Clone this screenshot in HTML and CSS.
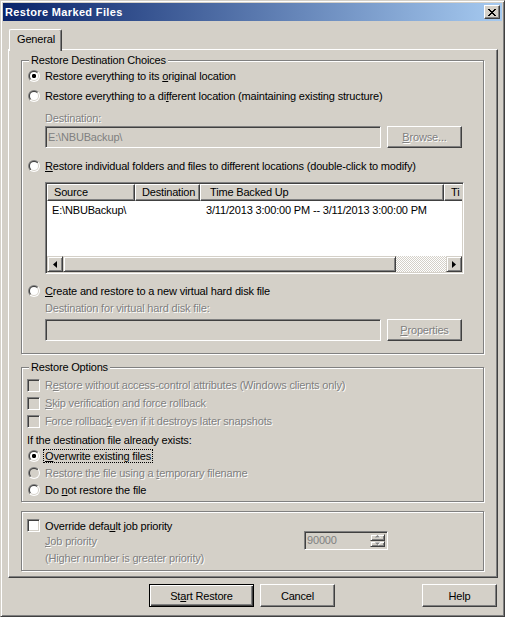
FILE: index.html
```html
<!DOCTYPE html>
<html lang="en">
<head>
<meta charset="utf-8">
<title>Restore Marked Files</title>
<link rel="stylesheet" href="styles.css">
</head>
<body>
<div class="window">
  <div class="titlebar">
    <span class="title">Restore Marked Files</span>
    <span class="close" role="button" aria-label="Close">
      <svg width="8" height="7" viewBox="0 0 8 7" shape-rendering="crispEdges"><path fill="#000" d="M0 0h2v1H0zM6 0h2v1H6zM1 1h2v1H1zM5 1h2v1H5zM2 2h4v1H2zM3 3h2v1H3zM2 4h4v1H2zM1 5h2v1H1zM5 5h2v1H5zM0 6h2v1H0zM6 6h2v1H6z"/></svg>
    </span>
  </div>

  <div class="tabs"><div class="tab">General</div></div>

  <div class="panel">
    <section class="group g-dest">
      <div class="legend">Restore Destination Choices</div>
      <div class="row h16 mt1"><span class="radio on"></span><span>Restore everything to its <u>o</u>riginal location</span></div>
      <div class="row h16 mt4"><span class="radio"></span><span>Restore everything to a di<u>f</u>ferent location (maintaining existing structure)</span></div>
      <div class="row h14 mt7 indent dis">Destination:</div>
      <div class="row mt1 indent">
        <div class="field w336">E:\NBUBackup\</div>
        <div class="btn dis-btn ml6"><span class="dis"><u>B</u>rowse...</span></div>
      </div>
      <div class="row h16 mt10"><span class="radio"></span><span><u>R</u>estore individual folders and files to different locations (double-click to modify)</span></div>
      <div class="listview mt8 indent">
        <div class="lv-header">
          <div class="hcell c-src">Source</div>
          <div class="hcell c-dst">Destination</div>
          <div class="hcell c-time">Time Backed Up</div>
          <div class="hcell c-type">Ti</div>
        </div>
        <div class="lv-body">
          <div class="lv-row">
            <div class="cell c-src">E:\NBUBackup\</div>
            <div class="cell c-dst"></div>
            <div class="cell c-time">3/11/2013 3:00:00 PM -- 3/11/2013 3:00:00 PM</div>
          </div>
        </div>
        <div class="hscroll">
          <div class="sbtn"><svg width="4" height="7" viewBox="0 0 4 7"><path d="M4 0v7L0 3.5z" fill="#000"/></svg></div>
          <div class="thumb"></div>
          <div class="track"></div>
          <div class="sbtn"><svg width="4" height="7" viewBox="0 0 4 7"><path d="M0 0v7l4-3.5z" fill="#000"/></svg></div>
        </div>
      </div>
      <div class="row h16 mt9"><span class="radio"></span><span><u>C</u>reate and restore to a new virtual hard disk file</span></div>
      <div class="row h14 mt2 indent dis">Destination for virtual hard disk file:</div>
      <div class="row mt4 indent">
        <div class="field w336"></div>
        <div class="btn dis-btn ml6"><span class="dis"><u>P</u>roperties</span></div>
      </div>
    </section>

    <section class="group g-opts">
      <div class="legend">Restore Options</div>
      <div class="row h18 mt2"><span class="check off"></span><span class="dis">R<u>e</u>store without access-control attributes (Windows clients only)</span></div>
      <div class="row h18"><span class="check off"></span><span class="dis"><u>S</u>kip verification and force rollback</span></div>
      <div class="row h18"><span class="check off"></span><span class="dis">Force rollbac<u>k</u> even if it destroys later snapshots</span></div>
      <div class="row h14 mt3">If the destination file already exists:</div>
      <div class="row h17"><span class="radio on"></span><span class="focus"><u>O</u>verwrite existing files</span></div>
      <div class="row h17"><span class="radio off"></span><span class="dis">Restore the file using a <u>t</u>emporary filename</span></div>
      <div class="row h17"><span class="radio"></span><span>Do <u>n</u>ot restore the file</span></div>
    </section>

    <section class="group g-prio">
      <div class="row h17 mt5"><span class="check"></span><span>Override defa<u>u</u>lt job priority</span></div>
      <div class="prio-line indent">
        <div class="prio-text">
          <div class="row h14 dis"><span><u>J</u>ob priority</span></div>
          <div class="row h14 mt3 dis">(Higher number is greater priority)</div>
        </div>
        <div class="spin">
          <span class="spin-value">90000</span>
          <span class="spin-btns">
            <span class="spin-btn"><svg width="6" height="4" viewBox="0 0 6 4"><path d="M1 3h5L3.5 0.5z" fill="#fff"/><path d="M0 2.5h5L2.5 0z" fill="#808080"/></svg></span>
            <span class="spin-btn"><svg width="6" height="4" viewBox="0 0 6 4"><path d="M1 1h5L3.5 3.5z" fill="#fff"/><path d="M0 0.5h5L2.5 3z" fill="#808080"/></svg></span>
          </span>
        </div>
      </div>
    </section>
  </div>

  <div class="actions">
    <div class="btn default">St<u>a</u>rt Restore</div>
    <div class="btn ml6">Cancel</div>
    <div class="btn push-right">Help</div>
  </div>
</div>
</body>
</html>
```

FILE: styles.css
```css
* { box-sizing: border-box; }

html, body {
  margin: 0;
  padding: 0;
}

body {
  background: #d4d0c8;
  font-family: "Liberation Sans", Arial, sans-serif;
  font-size: 11px;
  letter-spacing: -0.17px;
  color: #000;
}

u { text-decoration: underline; text-underline-offset: 1px; }

/* dialog frame */
.window {
  width: 505px;
  height: 617px;
  background: #d4d0c8;
  border: 1px solid;
  border-color: #d4d0c8 #404040 #404040 #d4d0c8;
  box-shadow: inset 1px 1px #fff, inset -1px -1px #808080;
  padding: 2px;
  display: flex;
  flex-direction: column;
}

.titlebar {
  height: 18px;
  flex: none;
  display: flex;
  align-items: center;
  padding: 0 2px 0 2px;
  background: linear-gradient(to right, #0a246a, #a6caf0);
  color: #fff;
  font-weight: bold;
  letter-spacing: 0.35px;
}

.title { flex: 1; line-height: 18px; white-space: nowrap; }

.close {
  width: 16px;
  height: 14px;
  display: flex;
  align-items: center;
  justify-content: center;
  background: #d4d0c8;
  border: 1px solid;
  border-color: #fff #404040 #404040 #fff;
  box-shadow: inset -1px -1px #808080;
  padding-right: 1px;
}

/* tab strip + page */
.tabs {
  height: 20px;
  margin: 8px 0 0 5px;
  display: flex;
  flex: none;
}

.tab {
  position: relative;
  z-index: 1;
  margin-left: 1px;
  width: 53px;
  height: 22px;
  background: #d4d0c8;
  border-top: 1px solid #fff;
  border-left: 1px solid #fff;
  border-right: 1px solid #404040;
  border-top-left-radius: 2px;
  border-top-right-radius: 2px;
  box-shadow: inset -1px 0 #808080;
  padding-left: 7px;
  line-height: 18px;
}

.panel {
  width: 490px;
  height: 529px;
  margin-left: 5px;
  flex: none;
  border: 1px solid;
  border-color: #fff #404040 #404040 #fff;
  box-shadow: inset -1px -1px #808080;
  padding: 10px 13px 0 12px;
}

/* etched group boxes */
.group {
  border: 1px solid #808080;
  box-shadow: inset 1px 1px #fff, 1px 1px #fff;
  padding: 0 0 0 5px;
  display: flex;
  flex-direction: column;
}

.g-dest { padding-bottom: 12px; }
.g-opts { margin-top: 13px; padding-bottom: 3px; }
.g-prio { margin-top: 9px; padding-bottom: 5px; }

.legend {
  align-self: flex-start;
  height: 14px;
  line-height: 14px;
  margin: -8px 0 0 2px;
  padding: 0 2px;
  background: #d4d0c8;
  white-space: nowrap;
}

.row {
  display: flex;
  align-items: center;
  white-space: nowrap;
}

.h14 { height: 14px; }
.h16 { height: 16px; }
.h17 { height: 17px; }
.h18 { height: 18px; }

.mt1 { margin-top: 1px; }
.mt2 { margin-top: 2px; }
.mt3 { margin-top: 3px; }
.mt4 { margin-top: 4px; }
.mt5 { margin-top: 5px; }
.mt7 { margin-top: 7px; }
.mt8 { margin-top: 8px; }
.mt9 { margin-top: 9px; }
.mt10 { margin-top: 10px; }
.ml6 { margin-left: 6px; }

.indent { margin-left: 18px; }

.dis {
  color: #808080;
  text-shadow: 1px 1px 0 #fff;
}

/* radio buttons */
.radio {
  position: relative;
  flex: none;
  width: 12px;
  height: 12px;
  margin: 0 5px 0 1px;
  border-radius: 50%;
  background: linear-gradient(135deg, #808080 50%, #fff 50%);
}

.radio::before {
  content: "";
  position: absolute;
  inset: 1px;
  border-radius: 50%;
  background: linear-gradient(135deg, #404040 50%, #d4d0c8 50%);
}

.radio::after {
  content: "";
  position: absolute;
  inset: 2px;
  border-radius: 50%;
  background: #fff;
}

.radio.on::after {
  background: radial-gradient(circle, #000 0 1.9px, #fff 2.4px);
}

.radio.off::after { background: #d4d0c8; }

/* check boxes */
.check {
  flex: none;
  width: 13px;
  height: 13px;
  margin-right: 5px;
  border: 1px solid;
  border-color: #808080 #fff #fff #808080;
  box-shadow: inset 1px 1px #404040, inset -1px -1px #d4d0c8;
  background: #fff;
}

.check.off { background: #d4d0c8; }

.focus {
  margin-left: -1px;
  padding: 0 1px;
  line-height: 12px;
  outline: 1px dotted #000;
}

/* edit fields */
.field {
  height: 22px;
  display: flex;
  align-items: center;
  padding-left: 2px;
  border: 1px solid;
  border-color: #808080 #fff #fff #808080;
  box-shadow: inset 1px 1px #404040, inset -1px -1px #d4d0c8;
  background: #d4d0c8;
  color: #808080;
}

.w336 { width: 336px; }

/* push buttons */
.btn {
  width: 75px;
  height: 23px;
  flex: none;
  display: flex;
  align-items: center;
  justify-content: center;
  background: #d4d0c8;
  border: 1px solid;
  border-color: #fff #404040 #404040 #fff;
  box-shadow: inset -1px -1px #808080;
  white-space: nowrap;
}

.btn.dis-btn { height: 22px; }

.btn.default {
  width: 105px;
  border: 1px solid #000;
  box-shadow: inset 1px 1px #fff, inset -1px -1px #404040, inset -2px -2px #808080;
}

.push-right { margin-left: auto; }

/* list view */
.listview {
  width: 419px;
  height: 92px;
  display: flex;
  flex-direction: column;
  border: 1px solid;
  border-color: #808080 #fff #fff #808080;
  box-shadow: inset 1px 1px #404040, inset -1px -1px #d4d0c8;
  padding: 1px;
  background: #fff;
  overflow: hidden;
}

.lv-header {
  height: 17px;
  flex: none;
  display: flex;
  overflow: hidden;
}

.hcell {
  flex: none;
  height: 17px;
  line-height: 15px;
  padding-left: 6px;
  background: #d4d0c8;
  border: 1px solid;
  border-color: #fff #404040 #404040 #fff;
  box-shadow: inset -1px -1px #808080;
  white-space: nowrap;
  overflow: hidden;
}

.c-src { width: 88px; }
.c-dst { width: 65px; }
.c-time { width: 244px; }
.c-type { width: 30px; }

.hcell.c-dst { padding-left: 6px; }
.hcell.c-time { padding-left: 9px; }

.lv-body {
  flex: 1;
  padding-top: 1px;
}

.lv-row {
  display: flex;
  height: 16px;
  line-height: 16px;
  white-space: nowrap;
}

.cell { flex: none; }
.cell.c-src { padding-left: 5px; }
.cell.c-time { padding-left: 6px; width: 300px; }

.hscroll {
  height: 16px;
  flex: none;
  display: flex;
}

.sbtn {
  width: 16px;
  height: 16px;
  flex: none;
  display: flex;
  align-items: center;
  justify-content: center;
  background: #d4d0c8;
  border: 1px solid;
  border-color: #d4d0c8 #404040 #404040 #d4d0c8;
  box-shadow: inset 1px 1px #fff, inset -1px -1px #808080;
}

.thumb {
  width: 333px;
  flex: none;
  background: #d4d0c8;
  border: 1px solid;
  border-color: #d4d0c8 #404040 #404040 #d4d0c8;
  box-shadow: inset 1px 1px #fff, inset -1px -1px #808080;
}

.track {
  flex: 1;
  background-color: #d4d0c8;
  background-image: repeating-conic-gradient(#fff 0 25%, #d4d0c8 0 50%);
  background-size: 2px 2px;
}

/* job priority */
.prio-line {
  display: flex;
  align-items: flex-start;
}

.prio-text {
  width: 259px;
  flex: none;
}

.spin {
  width: 84px;
  height: 19px;
  margin-top: -3px;
  display: flex;
  align-items: stretch;
  border: 1px solid;
  border-color: #808080 #fff #fff #808080;
  box-shadow: inset 1px 1px #404040, inset -1px -1px #d4d0c8;
  padding: 2px;
  background: #d4d0c8;
}

.spin-value {
  flex: 1;
  color: #808080;
  line-height: 13px;
}

.spin-btns {
  width: 15px;
  display: flex;
  flex-direction: column;
}

.spin-btn {
  flex: 1;
  display: flex;
  align-items: center;
  justify-content: center;
  background: #d4d0c8;
  border: 1px solid;
  border-color: #d4d0c8 #404040 #404040 #d4d0c8;
  box-shadow: inset 1px 1px #fff, inset -1px -1px #808080;
}

/* bottom buttons */
.actions {
  display: flex;
  flex: none;
  margin-top: 6px;
  padding: 0 5px 0 146px;
}
```
